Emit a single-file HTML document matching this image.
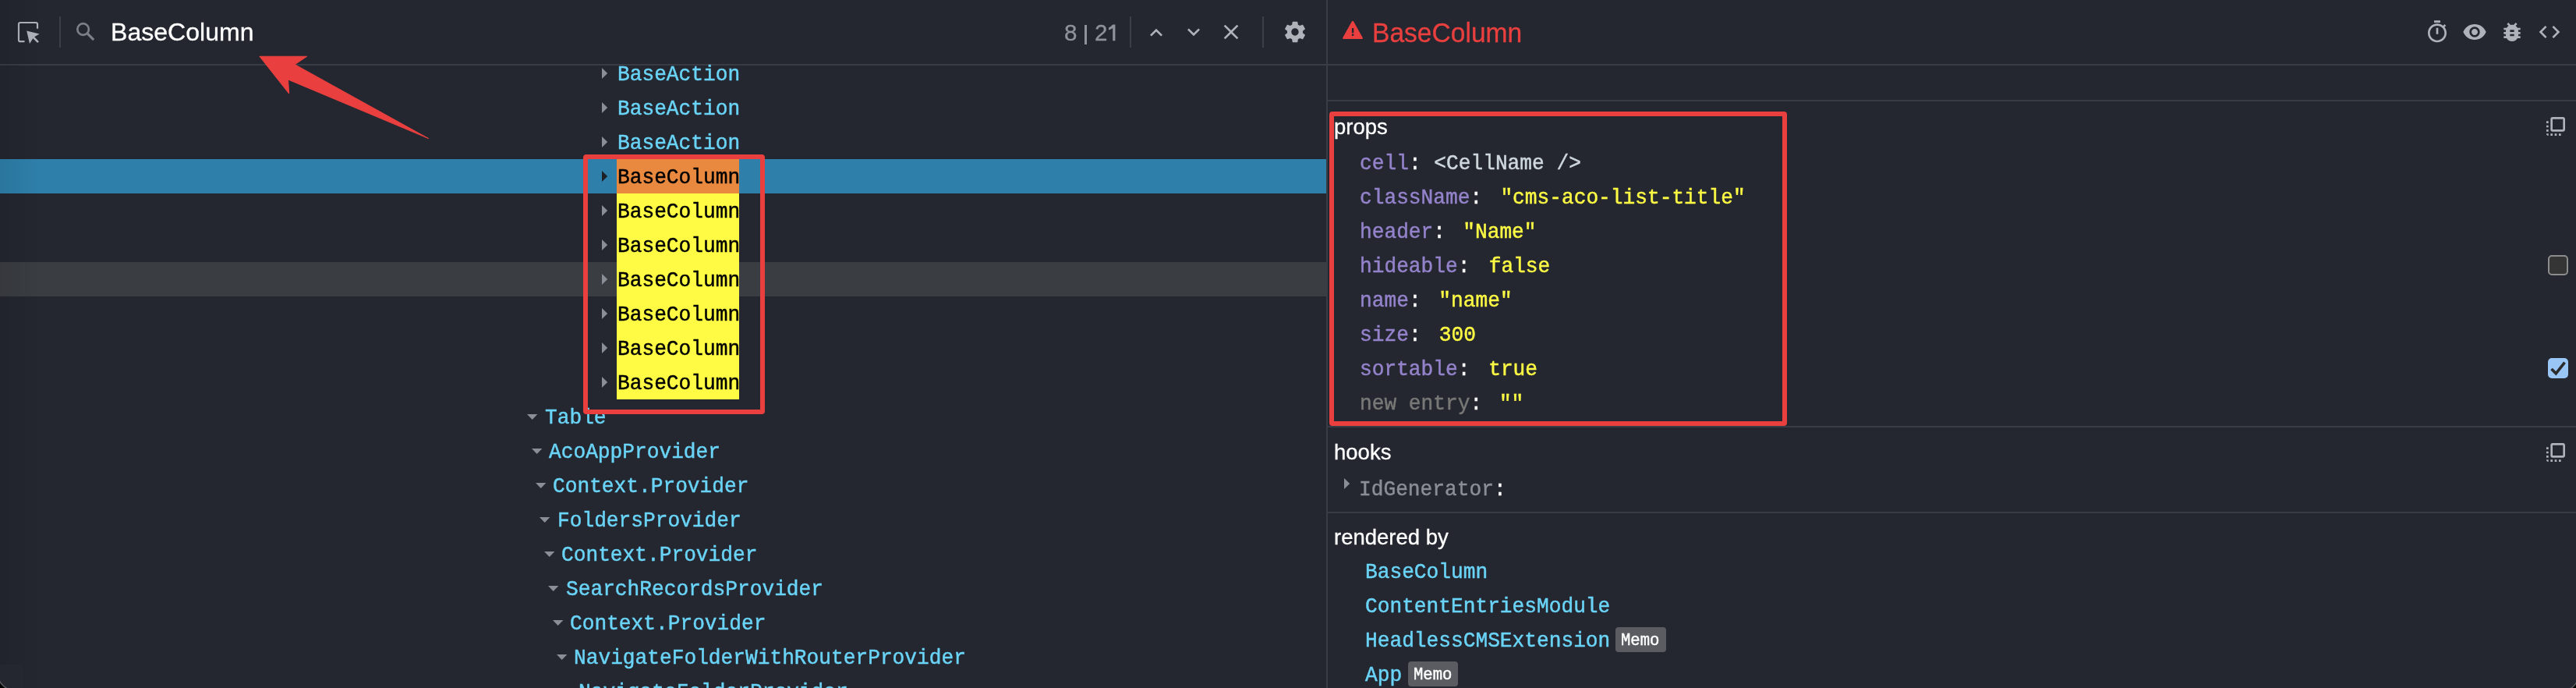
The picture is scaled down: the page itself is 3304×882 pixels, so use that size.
<!DOCTYPE html>
<html><head><meta charset="utf-8"><style>
html,body{margin:0;padding:0;width:3304px;height:882px;overflow:hidden;background:#242730;}
body{position:relative;}
body>div{will-change:transform;}
</style></head><body>
<div style="position:absolute;left:0;top:82px;width:1701px;height:2px;background:#393c45"></div>
<div style="position:absolute;left:1701px;top:0;width:2px;height:882px;background:#393c45"></div>
<div style="position:absolute;left:1703px;top:82px;width:1601px;height:2px;background:#393c45"></div>
<div style="position:absolute;left:1703px;top:128px;width:1601px;height:2px;background:#393c45"></div>
<div style="position:absolute;left:1703px;top:546px;width:1601px;height:2px;background:#393c45"></div>
<div style="position:absolute;left:1703px;top:656px;width:1601px;height:2px;background:#393c45"></div>
<div style="position:absolute;left:76px;top:21px;width:2px;height:40px;background:#3b3f48"></div>
<div style="position:absolute;left:1449px;top:21px;width:2px;height:40px;background:#3b3f48"></div>
<div style="position:absolute;left:1619px;top:21px;width:2px;height:40px;background:#3b3f48"></div>
<svg style="position:absolute;left:0;top:0" width="140" height="82" viewBox="0 0 140 82">
<path d="M31.5 53.2 H26 a2 2 0 0 1 -2 -2 V31 a2 2 0 0 1 2 -2 H46 a2 2 0 0 1 2 2 V36.8" fill="none" stroke="#afb2b9" stroke-width="2.2"/>
<path d="M34.2 39.6 L50.6 43.5 L44.2 47.3 L49.9 53.2 L48 55.1 L42.3 49.3 L38 56 Z" fill="#afb2b9"/>
<circle cx="106.6" cy="37.5" r="7.3" fill="none" stroke="#7b7f87" stroke-width="2.7"/>
<path d="M112.3 43.2 L120.2 51.1" stroke="#7b7f87" stroke-width="3.2" stroke-linecap="butt"/>
</svg>
<div style="position:absolute;left:141.80px;top:24.82px;font-family:'Liberation Sans', sans-serif;font-size:32.1px;line-height:32.1px;color:#ffffff;white-space:pre;-webkit-text-stroke:0.3px #ffffff;">BaseColumn</div>
<div style="position:absolute;left:1364.50px;top:27.24px;font-family:'Liberation Sans', sans-serif;font-size:29.6px;line-height:29.6px;color:#8e929a;white-space:pre;-webkit-text-stroke:0.3px #8e929a;">8</div>
<div style="position:absolute;left:1391.2px;top:32px;width:3px;height:25px;background:#8e929a"></div>
<div style="position:absolute;left:1403.50px;top:27.24px;font-family:'Liberation Sans', sans-serif;font-size:29.6px;line-height:29.6px;color:#8e929a;white-space:pre;-webkit-text-stroke:0.3px #8e929a;">2</div>
<svg style="position:absolute;left:1418px;top:28px" width="16" height="28" viewBox="0 0 16 28"><path d="M9.2 3.6 L12.4 3.6 L12.4 24.2 L9.2 24.2 L9.2 7.9 Q6.8 9.6 4.0 10.6 L4.0 7.6 Q7.0 6.2 9.2 3.6 Z" fill="#8e929a"/></svg>
<svg style="position:absolute;left:1467px;top:25.8px" width="32" height="32" viewBox="0 0 24 24"><path fill="#afb2b9" d="M12 8l-6 6 1.41 1.41L12 10.83l4.59 4.58L18 14z"/></svg>
<svg style="position:absolute;left:1515px;top:24.6px" width="32" height="32" viewBox="0 0 24 24"><path fill="#afb2b9" d="M16.59 8.59L12 13.17 7.41 8.59 6 10l6 6 6-6z"/></svg>
<svg style="position:absolute;left:1563px;top:25px" width="32" height="32" viewBox="0 0 24 24"><path fill="#afb2b9" d="M19 6.41L17.59 5 12 10.59 6.41 5 5 6.41 10.59 12 5 17.59 6.41 19 12 13.41 17.59 19 19 17.59 13.41 12z"/></svg>
<svg style="position:absolute;left:1645px;top:25px" width="32" height="32" viewBox="0 0 24 24"><path fill="#afb2b9" d="M19.43 12.98c.04-.32.07-.64.07-.98s-.03-.66-.07-.98l2.11-1.65c.19-.15.24-.42.12-.64l-2-3.46c-.12-.22-.39-.3-.61-.22l-2.49 1c-.52-.4-1.08-.73-1.69-.98l-.38-2.650C14.46 2.180 14.25 2 14 2h-4c-.25 0-.46.18-.49.42l-.38 2.65c-.61.25-1.17.59-1.690.98l-2.49-1c-.23-.09-.49 0-.61.22l-2 3.46c-.13.22-.07.49.12.64l2.11 1.65c-.04.32-.07.65-.07.98s.03.66.07.98l-2.11 1.65c-.19.15-.24.42-.12.64l2 3.46c.12.22.39.3.61.22l2.49-1c.52.4 1.08.73 1.69.98l.38 2.65c.03.24.24.42.49.42h4c.25 0 .46-.18.49-.42l.38-2.65c.61-.25 1.17-.59 1.69-.98l2.49 1c.23.09.49 0 .61-.22l2-3.46c.12-.22.07-.49-.12-.64l-2.11-1.65zM12 15.5c-1.93 0-3.5-1.57-3.5-3.5s1.57-3.5 3.5-3.5 3.5 1.57 3.5 3.5-1.57 3.5-3.5 3.5z"/></svg>
<div style="position:absolute;left:0;top:204px;width:1701px;height:44px;background:#2e7faa"></div>
<div style="position:absolute;left:0;top:336px;width:1701px;height:44px;background:#3a3d42"></div>
<div style="position:absolute;left:791px;top:204px;width:157px;height:44px;background:#e8893f"></div>
<div style="position:absolute;left:791px;top:248px;width:157px;height:264px;background:#fffb44"></div>
<svg style="position:absolute;left:772px;top:87px" width="8" height="14" viewBox="0 0 8 14"><path d="M0 0 L7.2 7 L0 14 Z" fill="#8a8e96"/></svg>
<div style="position:absolute;left:791.50px;top:82.93px;font-family:'Liberation Mono', monospace;font-size:26.2px;line-height:26.2px;color:#6ad4f7;white-space:pre;transform:scaleY(1.07);transform-origin:0 20.07px;-webkit-text-stroke:0.45px #6ad4f7;">BaseAction</div>
<svg style="position:absolute;left:772px;top:131px" width="8" height="14" viewBox="0 0 8 14"><path d="M0 0 L7.2 7 L0 14 Z" fill="#8a8e96"/></svg>
<div style="position:absolute;left:791.50px;top:126.93px;font-family:'Liberation Mono', monospace;font-size:26.2px;line-height:26.2px;color:#6ad4f7;white-space:pre;transform:scaleY(1.07);transform-origin:0 20.07px;-webkit-text-stroke:0.45px #6ad4f7;">BaseAction</div>
<svg style="position:absolute;left:772px;top:175px" width="8" height="14" viewBox="0 0 8 14"><path d="M0 0 L7.2 7 L0 14 Z" fill="#8a8e96"/></svg>
<div style="position:absolute;left:791.50px;top:170.93px;font-family:'Liberation Mono', monospace;font-size:26.2px;line-height:26.2px;color:#6ad4f7;white-space:pre;transform:scaleY(1.07);transform-origin:0 20.07px;-webkit-text-stroke:0.45px #6ad4f7;">BaseAction</div>
<svg style="position:absolute;left:772px;top:219px" width="8" height="14" viewBox="0 0 8 14"><path d="M0 0 L7.2 7 L0 14 Z" fill="#1d2026"/></svg>
<div style="position:absolute;left:791.50px;top:214.93px;font-family:'Liberation Mono', monospace;font-size:26.2px;line-height:26.2px;color:#000000;white-space:pre;transform:scaleY(1.07);transform-origin:0 20.07px;-webkit-text-stroke:0.45px #000000;">BaseColumn</div>
<svg style="position:absolute;left:772px;top:263px" width="8" height="14" viewBox="0 0 8 14"><path d="M0 0 L7.2 7 L0 14 Z" fill="#8a8e96"/></svg>
<div style="position:absolute;left:791.50px;top:258.93px;font-family:'Liberation Mono', monospace;font-size:26.2px;line-height:26.2px;color:#000000;white-space:pre;transform:scaleY(1.07);transform-origin:0 20.07px;-webkit-text-stroke:0.45px #000000;">BaseColumn</div>
<svg style="position:absolute;left:772px;top:307px" width="8" height="14" viewBox="0 0 8 14"><path d="M0 0 L7.2 7 L0 14 Z" fill="#8a8e96"/></svg>
<div style="position:absolute;left:791.50px;top:302.93px;font-family:'Liberation Mono', monospace;font-size:26.2px;line-height:26.2px;color:#000000;white-space:pre;transform:scaleY(1.07);transform-origin:0 20.07px;-webkit-text-stroke:0.45px #000000;">BaseColumn</div>
<svg style="position:absolute;left:772px;top:351px" width="8" height="14" viewBox="0 0 8 14"><path d="M0 0 L7.2 7 L0 14 Z" fill="#8a8e96"/></svg>
<div style="position:absolute;left:791.50px;top:346.93px;font-family:'Liberation Mono', monospace;font-size:26.2px;line-height:26.2px;color:#000000;white-space:pre;transform:scaleY(1.07);transform-origin:0 20.07px;-webkit-text-stroke:0.45px #000000;">BaseColumn</div>
<svg style="position:absolute;left:772px;top:395px" width="8" height="14" viewBox="0 0 8 14"><path d="M0 0 L7.2 7 L0 14 Z" fill="#8a8e96"/></svg>
<div style="position:absolute;left:791.50px;top:390.93px;font-family:'Liberation Mono', monospace;font-size:26.2px;line-height:26.2px;color:#000000;white-space:pre;transform:scaleY(1.07);transform-origin:0 20.07px;-webkit-text-stroke:0.45px #000000;">BaseColumn</div>
<svg style="position:absolute;left:772px;top:439px" width="8" height="14" viewBox="0 0 8 14"><path d="M0 0 L7.2 7 L0 14 Z" fill="#8a8e96"/></svg>
<div style="position:absolute;left:791.50px;top:434.93px;font-family:'Liberation Mono', monospace;font-size:26.2px;line-height:26.2px;color:#000000;white-space:pre;transform:scaleY(1.07);transform-origin:0 20.07px;-webkit-text-stroke:0.45px #000000;">BaseColumn</div>
<svg style="position:absolute;left:772px;top:483px" width="8" height="14" viewBox="0 0 8 14"><path d="M0 0 L7.2 7 L0 14 Z" fill="#8a8e96"/></svg>
<div style="position:absolute;left:791.50px;top:478.93px;font-family:'Liberation Mono', monospace;font-size:26.2px;line-height:26.2px;color:#000000;white-space:pre;transform:scaleY(1.07);transform-origin:0 20.07px;-webkit-text-stroke:0.45px #000000;">BaseColumn</div>
<svg style="position:absolute;left:676.2px;top:531px" width="14" height="8" viewBox="0 0 14 8"><path d="M0 0 L13.4 0 L6.7 7 Z" fill="#8a8e96"/></svg>
<div style="position:absolute;left:698.50px;top:522.93px;font-family:'Liberation Mono', monospace;font-size:26.2px;line-height:26.2px;color:#6ad4f7;white-space:pre;transform:scaleY(1.07);transform-origin:0 20.07px;-webkit-text-stroke:0.45px #6ad4f7;">Table</div>
<svg style="position:absolute;left:681.6px;top:575px" width="14" height="8" viewBox="0 0 14 8"><path d="M0 0 L13.4 0 L6.7 7 Z" fill="#8a8e96"/></svg>
<div style="position:absolute;left:703.90px;top:566.93px;font-family:'Liberation Mono', monospace;font-size:26.2px;line-height:26.2px;color:#6ad4f7;white-space:pre;transform:scaleY(1.07);transform-origin:0 20.07px;-webkit-text-stroke:0.45px #6ad4f7;">AcoAppProvider</div>
<svg style="position:absolute;left:687.0px;top:619px" width="14" height="8" viewBox="0 0 14 8"><path d="M0 0 L13.4 0 L6.7 7 Z" fill="#8a8e96"/></svg>
<div style="position:absolute;left:709.30px;top:610.93px;font-family:'Liberation Mono', monospace;font-size:26.2px;line-height:26.2px;color:#6ad4f7;white-space:pre;transform:scaleY(1.07);transform-origin:0 20.07px;-webkit-text-stroke:0.45px #6ad4f7;">Context.Provider</div>
<svg style="position:absolute;left:692.4000000000001px;top:663px" width="14" height="8" viewBox="0 0 14 8"><path d="M0 0 L13.4 0 L6.7 7 Z" fill="#8a8e96"/></svg>
<div style="position:absolute;left:714.70px;top:654.93px;font-family:'Liberation Mono', monospace;font-size:26.2px;line-height:26.2px;color:#6ad4f7;white-space:pre;transform:scaleY(1.07);transform-origin:0 20.07px;-webkit-text-stroke:0.45px #6ad4f7;">FoldersProvider</div>
<svg style="position:absolute;left:697.8000000000001px;top:707px" width="14" height="8" viewBox="0 0 14 8"><path d="M0 0 L13.4 0 L6.7 7 Z" fill="#8a8e96"/></svg>
<div style="position:absolute;left:720.10px;top:698.93px;font-family:'Liberation Mono', monospace;font-size:26.2px;line-height:26.2px;color:#6ad4f7;white-space:pre;transform:scaleY(1.07);transform-origin:0 20.07px;-webkit-text-stroke:0.45px #6ad4f7;">Context.Provider</div>
<svg style="position:absolute;left:703.2px;top:751px" width="14" height="8" viewBox="0 0 14 8"><path d="M0 0 L13.4 0 L6.7 7 Z" fill="#8a8e96"/></svg>
<div style="position:absolute;left:725.50px;top:742.93px;font-family:'Liberation Mono', monospace;font-size:26.2px;line-height:26.2px;color:#6ad4f7;white-space:pre;transform:scaleY(1.07);transform-origin:0 20.07px;-webkit-text-stroke:0.45px #6ad4f7;">SearchRecordsProvider</div>
<svg style="position:absolute;left:708.6px;top:795px" width="14" height="8" viewBox="0 0 14 8"><path d="M0 0 L13.4 0 L6.7 7 Z" fill="#8a8e96"/></svg>
<div style="position:absolute;left:730.90px;top:786.93px;font-family:'Liberation Mono', monospace;font-size:26.2px;line-height:26.2px;color:#6ad4f7;white-space:pre;transform:scaleY(1.07);transform-origin:0 20.07px;-webkit-text-stroke:0.45px #6ad4f7;">Context.Provider</div>
<svg style="position:absolute;left:714.0px;top:839px" width="14" height="8" viewBox="0 0 14 8"><path d="M0 0 L13.4 0 L6.7 7 Z" fill="#8a8e96"/></svg>
<div style="position:absolute;left:736.30px;top:830.93px;font-family:'Liberation Mono', monospace;font-size:26.2px;line-height:26.2px;color:#6ad4f7;white-space:pre;transform:scaleY(1.07);transform-origin:0 20.07px;-webkit-text-stroke:0.45px #6ad4f7;">NavigateFolderWithRouterProvider</div>
<svg style="position:absolute;left:719.4000000000001px;top:883px" width="14" height="8" viewBox="0 0 14 8"><path d="M0 0 L13.4 0 L6.7 7 Z" fill="#8a8e96"/></svg>
<div style="position:absolute;left:741.70px;top:874.93px;font-family:'Liberation Mono', monospace;font-size:26.2px;line-height:26.2px;color:#6ad4f7;white-space:pre;transform:scaleY(1.07);transform-origin:0 20.07px;-webkit-text-stroke:0.45px #6ad4f7;">NavigateFolderProvider</div>
<div style="position:absolute;left:748px;top:198px;width:221px;height:321px;border:6px solid #e9403f;border-radius:4px"></div>
<svg style="position:absolute;left:0;top:0" width="600" height="200" viewBox="0 0 600 200"><path d="M332.9 72.3 L393.7 72.3 L378.2 82.7 L549.7 177.6 L369.5 102 L370.7 120.1 Z" fill="#e9403f" stroke="#e9403f" stroke-width="1" stroke-linejoin="round"/></svg>
<svg style="position:absolute;left:1718px;top:22px" width="34" height="32" viewBox="0 0 34 32"><path d="M17 6.2 L28.6 26.8 L5.4 26.8 Z" fill="#e9403f" stroke="#e9403f" stroke-width="2.6" stroke-linejoin="round"/><rect x="15.9" y="14.1" width="2.4" height="6" fill="#242730"/><rect x="15.9" y="21.5" width="2.4" height="2.4" fill="#242730"/></svg>
<div style="position:absolute;left:1759.50px;top:25.65px;font-family:'Liberation Sans', sans-serif;font-size:33.6px;line-height:33.6px;color:#e9403f;white-space:pre;-webkit-text-stroke:0.3px #e9403f;transform:scaleY(1.06);transform-origin:0 28.45px">BaseColumn</div>
<svg style="position:absolute;left:3110px;top:24.8px" width="32" height="32" viewBox="0 0 24 24"><path fill="#afb2b9" d="M15 1H9v2h6V1zm-4 13h2V8h-2v6zm8.03-6.61l1.42-1.42c-.43-.51-.9-.99-1.41-1.41l-1.42 1.42C16.07 4.74 14.12 4 12 4c-4.97 0-9 4.03-9 9s4.02 9 9 9 9-4.03 9-9c0-2.12-.74-4.07-1.97-5.61zM12 20c-3.87 0-7-3.13-7-7s3.13-7 7-7 7 3.13 7 7-3.13 7-7 7z"/></svg>
<svg style="position:absolute;left:3158px;top:24.8px" width="32" height="32" viewBox="0 0 24 24"><path fill="#afb2b9" d="M12 4.5C7 4.5 2.73 7.61 1 12c1.73 4.39 6 7.5 11 7.5s9.27-3.11 11-7.5c-1.73-4.39-6-7.5-11-7.5zM12 17c-2.76 0-5-2.24-5-5s2.24-5 5-5 5 2.24 5 5-2.24 5-5 5zm0-8c-1.66 0-3 1.34-3 3s1.34 3 3 3 3-1.34 3-3-1.34-3-3-3z"/></svg>
<svg style="position:absolute;left:3205.6px;top:24.8px" width="32" height="32" viewBox="0 0 24 24"><path fill="#afb2b9" d="M20 8h-2.81c-.45-.78-1.07-1.45-1.82-1.96L17 4.41 15.59 3l-2.17 2.17C12.96 5.06 12.49 5 12 5c-.49 0-.96.06-1.41.17L8.41 3 7 4.41l1.62 1.63C7.88 6.55 7.26 7.22 6.81 8H4v2h2.09c-.05.33-.09.66-.09 1v1H4v2h2v1c0 .34.04.67.09 1H4v2h2.81c1.04 1.79 2.97 3 5.19 3s4.15-1.21 5.19-3H20v-2h-2.09c.05-.33.09-.66.09-1v-1h2v-2h-2v-1c0-.34-.04-.67-.09-1H20V8zm-6 8h-4v-2h4v2zm0-4h-4v-2h4v2z"/></svg>
<svg style="position:absolute;left:3254px;top:24.8px" width="32" height="32" viewBox="0 0 24 24"><path fill="#afb2b9" d="M9.4 16.6L4.8 12l4.6-4.6L8 6l-6 6 6 6 1.4-1.4zm5.2 0l4.6-4.6-4.6-4.6L16 6l6 6-6 6-1.4-1.4z"/></svg>
<svg style="position:absolute;left:3261.7px;top:145.8px" width="32" height="32" viewBox="0 0 24 24"><path fill="#afb2b9" d="M3 13h2v-2H3v2zm0 4h2v-2H3v2zm2 4v-2H3a2 2 0 0 0 2 2zM3 9h2V7H3v2zm12 12h2v-2h-2v2zm4-18H9a2 2 0 0 0-2 2v10a2 2 0 0 0 2 2h10c1.1 0 2-.9 2-2V5c0-1.1-.9-2-2-2zm0 12H9V5h10v10zm-8 6h2v-2h-2v2zm-4 0h2v-2H7v2z"/></svg>
<svg style="position:absolute;left:3261.7px;top:563.8px" width="32" height="32" viewBox="0 0 24 24"><path fill="#afb2b9" d="M3 13h2v-2H3v2zm0 4h2v-2H3v2zm2 4v-2H3a2 2 0 0 0 2 2zM3 9h2V7H3v2zm12 12h2v-2h-2v2zm4-18H9a2 2 0 0 0-2 2v10a2 2 0 0 0 2 2h10c1.1 0 2-.9 2-2V5c0-1.1-.9-2-2-2zm0 12H9V5h10v10zm-8 6h2v-2h-2v2zm-4 0h2v-2H7v2z"/></svg>
<div style="position:absolute;left:1711.20px;top:148.52px;font-family:'Liberation Sans', sans-serif;font-size:27.5px;line-height:27.5px;color:#ffffff;white-space:pre;-webkit-text-stroke:0.3px #ffffff;">props</div>
<div style="position:absolute;left:1710.50px;top:566.22px;font-family:'Liberation Sans', sans-serif;font-size:27.5px;line-height:27.5px;color:#ffffff;white-space:pre;-webkit-text-stroke:0.3px #ffffff;">hooks</div>
<div style="position:absolute;left:1710.50px;top:674.52px;font-family:'Liberation Sans', sans-serif;font-size:27.5px;line-height:27.5px;color:#ffffff;white-space:pre;-webkit-text-stroke:0.3px #ffffff;">rendered by</div>
<div style="position:absolute;left:1743.5px;top:196.93px;font-family:'Liberation Mono', monospace;font-size:26.2px;line-height:26.2px;white-space:pre;transform:scaleY(1.07);transform-origin:0 20.07px"><span style="color:#9483cb;-webkit-text-stroke:0.45px #9483cb">cell</span><span style="color:#fff;-webkit-text-stroke:0.45px #fff">: </span><span style="color:#cfd8dd;-webkit-text-stroke:0.45px #cfd8dd;margin-left:1px">&lt;CellName /&gt;</span></div>
<div style="position:absolute;left:1743.5px;top:240.93px;font-family:'Liberation Mono', monospace;font-size:26.2px;line-height:26.2px;white-space:pre;transform:scaleY(1.07);transform-origin:0 20.07px"><span style="color:#9483cb;-webkit-text-stroke:0.45px #9483cb">className</span><span style="color:#fff;-webkit-text-stroke:0.45px #fff">: </span><span style="color:#fcf944;-webkit-text-stroke:0.45px #fcf944;margin-left:7.5px">"cms-aco-list-title"</span></div>
<div style="position:absolute;left:1743.5px;top:284.93px;font-family:'Liberation Mono', monospace;font-size:26.2px;line-height:26.2px;white-space:pre;transform:scaleY(1.07);transform-origin:0 20.07px"><span style="color:#9483cb;-webkit-text-stroke:0.45px #9483cb">header</span><span style="color:#fff;-webkit-text-stroke:0.45px #fff">: </span><span style="color:#fcf944;-webkit-text-stroke:0.45px #fcf944;margin-left:6.5px">"Name"</span></div>
<div style="position:absolute;left:1743.5px;top:328.93px;font-family:'Liberation Mono', monospace;font-size:26.2px;line-height:26.2px;white-space:pre;transform:scaleY(1.07);transform-origin:0 20.07px"><span style="color:#9483cb;-webkit-text-stroke:0.45px #9483cb">hideable</span><span style="color:#fff;-webkit-text-stroke:0.45px #fff">: </span><span style="color:#fcf944;-webkit-text-stroke:0.45px #fcf944;margin-left:8.5px">false</span></div>
<div style="position:absolute;left:1743.5px;top:372.93px;font-family:'Liberation Mono', monospace;font-size:26.2px;line-height:26.2px;white-space:pre;transform:scaleY(1.07);transform-origin:0 20.07px"><span style="color:#9483cb;-webkit-text-stroke:0.45px #9483cb">name</span><span style="color:#fff;-webkit-text-stroke:0.45px #fff">: </span><span style="color:#fcf944;-webkit-text-stroke:0.45px #fcf944;margin-left:7px">"name"</span></div>
<div style="position:absolute;left:1743.5px;top:416.93px;font-family:'Liberation Mono', monospace;font-size:26.2px;line-height:26.2px;white-space:pre;transform:scaleY(1.07);transform-origin:0 20.07px"><span style="color:#9483cb;-webkit-text-stroke:0.45px #9483cb">size</span><span style="color:#fff;-webkit-text-stroke:0.45px #fff">: </span><span style="color:#fcf944;-webkit-text-stroke:0.45px #fcf944;margin-left:7.5px">300</span></div>
<div style="position:absolute;left:1743.5px;top:460.93px;font-family:'Liberation Mono', monospace;font-size:26.2px;line-height:26.2px;white-space:pre;transform:scaleY(1.07);transform-origin:0 20.07px"><span style="color:#9483cb;-webkit-text-stroke:0.45px #9483cb">sortable</span><span style="color:#fff;-webkit-text-stroke:0.45px #fff">: </span><span style="color:#fcf944;-webkit-text-stroke:0.45px #fcf944;margin-left:8px">true</span></div>
<div style="position:absolute;left:1743.5px;top:504.93px;font-family:'Liberation Mono', monospace;font-size:26.2px;line-height:26.2px;white-space:pre;transform:scaleY(1.07);transform-origin:0 20.07px"><span style="color:#787877;-webkit-text-stroke:0.45px #787877">new entry</span><span style="color:#fff;-webkit-text-stroke:0.45px #fff">: </span><span style="color:#fcf944;-webkit-text-stroke:0.45px #fcf944;margin-left:6px">""</span></div>
<div style="position:absolute;left:3268px;top:327px;width:22px;height:22px;border:2px solid #8c8c8c;background:#353535;border-radius:5px"></div>
<div style="position:absolute;left:3268px;top:459px;width:26px;height:26px;background:#9ac6f5;border-radius:5px"></div>
<svg style="position:absolute;left:3268px;top:459px" width="26" height="26" viewBox="0 0 26 26"><path d="M4.5 14 L10.3 19.8 L21.5 5.6" fill="none" stroke="#2b2b2b" stroke-width="3.6"/></svg>
<div style="position:absolute;left:1705px;top:142.5px;width:575px;height:391px;border:6px solid #e9403f;border-radius:4px"></div>
<svg style="position:absolute;left:1724px;top:613px" width="8" height="14" viewBox="0 0 8 14"><path d="M0 0 L7.2 7 L0 14 Z" fill="#8a8e96"/></svg>
<div style="position:absolute;left:1742.5px;top:615.23px;font-family:'Liberation Mono', monospace;font-size:26.2px;line-height:26.2px;white-space:pre;transform:scaleY(1.07);transform-origin:0 20.07px"><span style="color:#8a8e95;-webkit-text-stroke:0.45px #8a8e95">IdGenerator</span><span style="color:#fff;-webkit-text-stroke:0.45px #fff">:</span></div>
<div style="position:absolute;left:1750.50px;top:720.93px;font-family:'Liberation Mono', monospace;font-size:26.2px;line-height:26.2px;color:#6ad4f7;white-space:pre;transform:scaleY(1.07);transform-origin:0 20.07px;-webkit-text-stroke:0.45px #6ad4f7;">BaseColumn</div>
<div style="position:absolute;left:1750.50px;top:764.93px;font-family:'Liberation Mono', monospace;font-size:26.2px;line-height:26.2px;color:#6ad4f7;white-space:pre;transform:scaleY(1.07);transform-origin:0 20.07px;-webkit-text-stroke:0.45px #6ad4f7;">ContentEntriesModule</div>
<div style="position:absolute;left:1750.50px;top:808.93px;font-family:'Liberation Mono', monospace;font-size:26.2px;line-height:26.2px;color:#6ad4f7;white-space:pre;transform:scaleY(1.07);transform-origin:0 20.07px;-webkit-text-stroke:0.45px #6ad4f7;">HeadlessCMSExtension</div>
<div style="position:absolute;left:1750.50px;top:852.93px;font-family:'Liberation Mono', monospace;font-size:26.2px;line-height:26.2px;color:#6ad4f7;white-space:pre;transform:scaleY(1.07);transform-origin:0 20.07px;-webkit-text-stroke:0.45px #6ad4f7;">App</div>
<div style="position:absolute;left:2072px;top:804px;width:64.7px;height:31.7px;background:#5a5c62;border-radius:4px"></div>
<div style="position:absolute;left:2079.00px;top:812.22px;font-family:'Liberation Mono', monospace;font-size:20.6px;line-height:20.6px;color:#ffffff;white-space:pre;transform:scaleY(1.07);transform-origin:0 15.78px;-webkit-text-stroke:0.45px #ffffff;">Memo</div>
<div style="position:absolute;left:1806px;top:848px;width:63.6px;height:31.8px;background:#5a5c62;border-radius:4px"></div>
<div style="position:absolute;left:1813.00px;top:856.22px;font-family:'Liberation Mono', monospace;font-size:20.6px;line-height:20.6px;color:#ffffff;white-space:pre;transform:scaleY(1.07);transform-origin:0 15.78px;-webkit-text-stroke:0.45px #ffffff;">Memo</div>
<div style="position:absolute;left:0;top:0;width:50px;height:882px;background:linear-gradient(to right, rgba(0,0,0,0.07), rgba(0,0,0,0))"></div>
<svg style="position:absolute;left:0;top:852px" width="30" height="30" viewBox="0 0 30 30"><path d="M0 0 H30 V30 H0 Z" fill="#000"/><circle cx="20" cy="10" r="23.3" fill="#242730" stroke="#55585e" stroke-width="1.6"/></svg>
<svg style="position:absolute;left:3274px;top:852px" width="30" height="30" viewBox="0 0 30 30"><path d="M0 0 H30 V30 H0 Z" fill="#000"/><circle cx="10" cy="10" r="24.4" fill="#242730" stroke="#55585e" stroke-width="1.6"/></svg>
</body></html>
